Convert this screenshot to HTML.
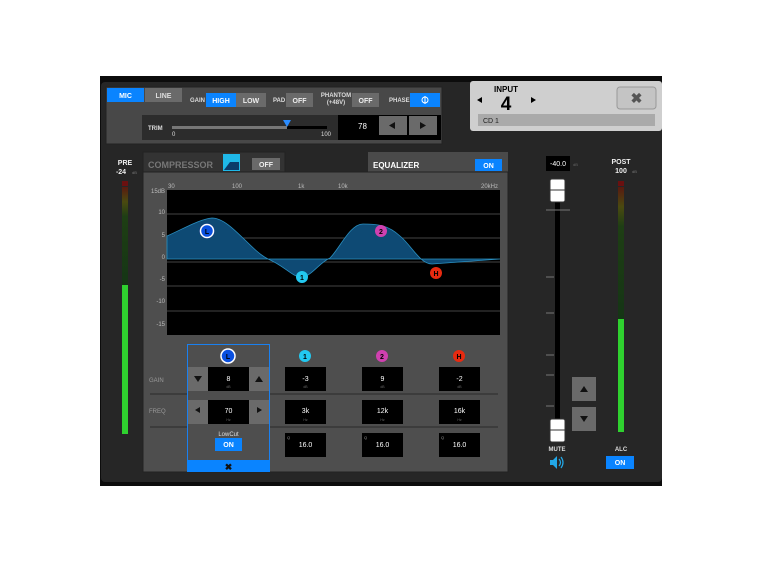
<!DOCTYPE html>
<html><head><style>
body{margin:0;background:#fff;width:762px;height:562px;overflow:hidden}
svg{display:block;font-family:"Liberation Sans",sans-serif}
</style></head><body>
<svg width="762" height="562" viewBox="0 0 762 562">
<rect x="0" y="0" width="762" height="562" fill="#fff"/>
<rect x="100" y="76" width="562" height="410" fill="#0c0c0c"/>
<rect x="101" y="82" width="561" height="400" rx="4" fill="#262626"/>
<!-- input box -->
<rect x="106" y="87" width="336" height="57" fill="#484848" stroke="#222"/>
<rect x="107" y="88" width="37" height="14" fill="#0a84ff"/>
<text x="125.5" y="98" font-size="7" fill="#fff" text-anchor="middle" font-weight="bold">MIC</text>
<rect x="145" y="88" width="37" height="14" fill="#6a6a6a"/>
<text x="163.5" y="98" font-size="7" fill="#ddd" text-anchor="middle" font-weight="bold">LINE</text>
<text x="190" y="102" font-size="6" fill="#ddd" font-weight="bold">GAIN</text>
<rect x="206" y="93" width="30" height="14" fill="#0a84ff"/>
<text x="221" y="103" font-size="7" fill="#fff" text-anchor="middle" font-weight="bold">HIGH</text>
<rect x="236" y="93" width="30" height="14" fill="#6a6a6a"/>
<text x="251" y="103" font-size="7" fill="#eee" text-anchor="middle" font-weight="bold">LOW</text>
<text x="273" y="102" font-size="6" fill="#ddd" font-weight="bold">PAD</text>
<rect x="286" y="93" width="27" height="14" fill="#6a6a6a"/>
<text x="299.5" y="103" font-size="7" fill="#eee" text-anchor="middle" font-weight="bold">OFF</text>
<text x="336" y="97" font-size="6" fill="#ddd" text-anchor="middle" font-weight="bold">PHANTOM</text>
<text x="336" y="104" font-size="6" fill="#ddd" text-anchor="middle" font-weight="bold">(+48V)</text>
<rect x="352" y="93" width="27" height="14" fill="#6a6a6a"/>
<text x="365.5" y="103" font-size="7" fill="#eee" text-anchor="middle" font-weight="bold">OFF</text>
<text x="389" y="102" font-size="6" fill="#ddd" font-weight="bold">PHASE</text>
<rect x="410" y="93" width="30" height="14" fill="#0a84ff"/>
<circle cx="425" cy="100" r="3" fill="none" stroke="#fff" stroke-width="1"/><line x1="425" y1="96" x2="425" y2="104" stroke="#fff"/>
<rect x="142" y="115" width="196" height="25" fill="#2c2c2c"/>
<rect x="338" y="115" width="103" height="25" fill="#000"/>
<text x="148" y="130" font-size="6" fill="#ddd" font-weight="bold">TRIM</text>
<rect x="172" y="126" width="115" height="3" fill="#777"/>
<rect x="287" y="126" width="40" height="3" fill="#000"/>
<polygon points="283,120 291,120 287,127" fill="#2a8cff"/>
<text x="172" y="136" font-size="6" fill="#ddd">0</text>
<text x="321" y="136" font-size="6" fill="#ddd">100</text>
<text x="358" y="129" font-size="8" fill="#fff">78</text>
<rect x="379" y="116" width="28" height="19" fill="#6a6a6a"/>
<polygon points="389,125.5 395,122 395,129" fill="#111"/>
<rect x="409" y="116" width="28" height="19" fill="#6a6a6a"/>
<polygon points="426,125.5 420,122 420,129" fill="#111"/>
<!-- input name -->
<rect x="470" y="81" width="192" height="50" rx="3" fill="#cfcfcf"/>
<text x="506" y="92" font-size="8" fill="#000" text-anchor="middle" font-weight="bold">INPUT</text>
<text x="506" y="110" font-size="19" fill="#000" text-anchor="middle" font-weight="bold">4</text>
<polygon points="477,100 482,97 482,103" fill="#000"/>
<polygon points="536,100 531,97 531,103" fill="#000"/>
<rect x="617" y="87" width="39" height="22" rx="3" fill="#c4c4c4" stroke="#999"/>
<text x="636.5" y="103" font-size="14" fill="#555" text-anchor="middle" font-weight="bold">✖</text>
<rect x="478" y="114" width="177" height="12" fill="#aaa"/>
<text x="483" y="123" font-size="7" fill="#222">CD 1</text>
<!-- PRE -->
<text x="125" y="165" font-size="7" fill="#eee" text-anchor="middle" font-weight="bold">PRE</text>
<text x="121" y="174" font-size="7" fill="#eee" text-anchor="middle" font-weight="bold">-24</text>
<text x="132" y="174" font-size="4" fill="#777">dB</text>
<rect x="122" y="181" width="6" height="5" fill="#6a1010"/>
<defs>
<linearGradient id="mg" x1="0" y1="0" x2="0" y2="1">
<stop offset="0" stop-color="#5a1a10"/><stop offset="0.15" stop-color="#4a4a10"/><stop offset="0.3" stop-color="#1e3e14"/><stop offset="1" stop-color="#153515"/></linearGradient>
</defs>
<rect x="122" y="187" width="6" height="98" fill="url(#mg)"/>
<rect x="122" y="285" width="6" height="149" fill="#2fd12f"/>
<!-- tabs -->
<rect x="143" y="152" width="142" height="22" fill="#333" stroke="#222"/>
<text x="148" y="168" font-size="9" fill="#777" font-weight="bold">COMPRESSOR</text>
<rect x="223" y="154" width="17" height="17" fill="#1fb8e8"/>
<polygon points="224,170 230,162 239,162 239,170" fill="#0b3b6a"/>
<rect x="252" y="158" width="28" height="12" fill="#6a6a6a"/>
<text x="266" y="167" font-size="7" fill="#eee" text-anchor="middle" font-weight="bold">OFF</text>
<rect x="368" y="152" width="140" height="22" fill="#4a4a4a"/>
<text x="373" y="168" font-size="8" fill="#fff" font-weight="bold">EQUALIZER</text>
<rect x="475" y="159" width="27" height="12" fill="#0a84ff"/>
<text x="488.5" y="168" font-size="7" fill="#fff" text-anchor="middle" font-weight="bold">ON</text>
<!-- eq panel -->
<rect x="143" y="172" width="365" height="300" fill="#4e4e4e" stroke="#222"/>
<rect x="167" y="190" width="333" height="145" fill="#000"/>
<g font-size="6" fill="#bbb">
<text x="168" y="188">30</text><text x="232" y="188">100</text><text x="298" y="188">1k</text><text x="338" y="188">10k</text><text x="481" y="188">20kHz</text>
<text x="165" y="193" text-anchor="end">15dB</text>
<text x="165" y="214" text-anchor="end">10</text>
<text x="165" y="237" text-anchor="end">5</text>
<text x="165" y="259" text-anchor="end">0</text>
<text x="165" y="281" text-anchor="end">-5</text>
<text x="165" y="303" text-anchor="end">-10</text>
<text x="165" y="326" text-anchor="end">-15</text>
</g>
<g stroke="#444" stroke-width="1">
<line x1="167" y1="214" x2="500" y2="214"/><line x1="167" y1="238" x2="500" y2="238"/>
<line x1="167" y1="262" x2="500" y2="262"/><line x1="167" y1="286" x2="500" y2="286"/>
<line x1="167" y1="311" x2="500" y2="311"/>
</g>
<path d="M167,236 C185,228 200,219 212,218 C230,218 250,250 268,259 C285,266 293,278 302,277 C312,276 320,262 330,258 C340,248 350,224 363,224 C378,224 388,225 400,236 C412,246 420,264 432,264 L500,259 L500,259 L167,259 Z" fill="#0e4a74" stroke="#2a8fc0" stroke-width="0.8"/>
<circle cx="207" cy="231" r="8" fill="#1a3a8a" opacity="0.5"/>
<circle cx="207" cy="231" r="6.5" fill="#0a50e0" stroke="#fff" stroke-width="1.5"/>
<text x="207" y="234" font-size="7" fill="#000" text-anchor="middle" font-weight="bold">L</text>
<circle cx="302" cy="277" r="6" fill="#22c8f0"/><text x="302" y="280" font-size="7" fill="#000" text-anchor="middle" font-weight="bold">1</text>
<circle cx="381" cy="231" r="6" fill="#d040b0"/><text x="381" y="234" font-size="7" fill="#000" text-anchor="middle" font-weight="bold">2</text>
<circle cx="436" cy="273" r="6" fill="#e82a10"/><text x="436" y="276" font-size="7" fill="#000" text-anchor="middle" font-weight="bold">H</text>
<!-- band controls -->
<line x1="150" y1="394" x2="498" y2="394" stroke="#2a2a2a"/>
<line x1="150" y1="427" x2="498" y2="427" stroke="#2a2a2a"/>
<text x="149" y="382" font-size="6" fill="#999">GAIN</text>
<text x="149" y="413" font-size="6" fill="#999">FREQ</text>
<rect x="187.5" y="344.5" width="82" height="127" fill="#4e4e4e" stroke="#1a80f0"/>
<rect x="187" y="460" width="83" height="12" fill="#0a84ff"/>
<text x="228.5" y="470" font-size="9" fill="#111" text-anchor="middle" font-weight="bold">✖</text>
<circle cx="228" cy="356" r="7" fill="#0a50e0" stroke="#fff" stroke-width="1.5"/><text x="228" y="359" font-size="7" fill="#000" text-anchor="middle" font-weight="bold">L</text>
<circle cx="305" cy="356" r="6" fill="#22c8f0"/><text x="305" y="359" font-size="7" fill="#000" text-anchor="middle" font-weight="bold">1</text>
<circle cx="382" cy="356" r="6" fill="#d040b0"/><text x="382" y="359" font-size="7" fill="#000" text-anchor="middle" font-weight="bold">2</text>
<circle cx="459" cy="356" r="6" fill="#e82a10"/><text x="459" y="359" font-size="7" fill="#000" text-anchor="middle" font-weight="bold">H</text>
<!-- L column -->
<rect x="188" y="367" width="20" height="24" fill="#6a6a6a"/><polygon points="194,376 202,376 198,382" fill="#111"/>
<rect x="208" y="367" width="41" height="24" fill="#000"/>
<rect x="249" y="367" width="20" height="24" fill="#6a6a6a"/><polygon points="255,382 263,382 259,376" fill="#111"/>
<rect x="188" y="400" width="20" height="24" fill="#6a6a6a"/><polygon points="195,410 200,407 200,413" fill="#111"/>
<rect x="208" y="400" width="41" height="24" fill="#000"/>
<rect x="249" y="400" width="20" height="24" fill="#6a6a6a"/><polygon points="262,410 257,407 257,413" fill="#111"/>
<text x="228.5" y="436" font-size="6" fill="#ddd" text-anchor="middle">LowCut</text>
<rect x="215" y="438" width="27" height="13" fill="#0a84ff"/>
<text x="228.5" y="447" font-size="7" fill="#fff" text-anchor="middle" font-weight="bold">ON</text>
<g fill="#000">
<rect x="285" y="367" width="41" height="24"/><rect x="362" y="367" width="41" height="24"/><rect x="439" y="367" width="41" height="24"/>
<rect x="285" y="400" width="41" height="24"/><rect x="362" y="400" width="41" height="24"/><rect x="439" y="400" width="41" height="24"/>
<rect x="285" y="433" width="41" height="24"/><rect x="362" y="433" width="41" height="24"/><rect x="439" y="433" width="41" height="24"/>
</g>
<g font-size="7" fill="#fff" text-anchor="middle">
<text x="228.5" y="381">8</text><text x="305.5" y="381">-3</text><text x="382.5" y="381">9</text><text x="459.5" y="381">-2</text>
<text x="228.5" y="413">70</text><text x="305.5" y="413">3k</text><text x="382.5" y="413">12k</text><text x="459.5" y="413">16k</text>
<text x="305.5" y="447">16.0</text><text x="382.5" y="447">16.0</text><text x="459.5" y="447">16.0</text>
</g>
<g font-size="3.5" fill="#666" text-anchor="middle">
<text x="228.5" y="388">dB</text><text x="305.5" y="388">dB</text><text x="382.5" y="388">dB</text><text x="459.5" y="388">dB</text>
<text x="228.5" y="421">Hz</text><text x="305.5" y="421">Hz</text><text x="382.5" y="421">Hz</text><text x="459.5" y="421">Hz</text>
</g>
<g font-size="4" fill="#999"><text x="287" y="439">Q</text><text x="364" y="439">Q</text><text x="441" y="439">Q</text></g>
<!-- fader -->
<rect x="546" y="156" width="24" height="15" fill="#000"/>
<text x="558" y="166" font-size="7" fill="#fff" text-anchor="middle">-40.0</text>
<text x="573" y="166" font-size="4" fill="#666">dB</text>
<rect x="555" y="185" width="5" height="256" fill="#000"/>
<g stroke="#777" stroke-width="1">
<line x1="546" y1="210" x2="570" y2="210"/><line x1="546" y1="277" x2="554" y2="277"/>
<line x1="546" y1="313" x2="554" y2="313"/><line x1="546" y1="355" x2="554" y2="355"/>
<line x1="546" y1="375" x2="554" y2="375"/><line x1="546" y1="406" x2="554" y2="406"/>
</g>
<rect x="550" y="179" width="15" height="23" rx="2" fill="#fff" stroke="#333"/><line x1="550" y1="190" x2="565" y2="190" stroke="#333"/>
<rect x="550" y="419" width="15" height="23" rx="2" fill="#fff" stroke="#333"/><line x1="550" y1="430" x2="565" y2="430" stroke="#333"/>
<rect x="572" y="377" width="24" height="24" fill="#6a6a6a"/><polygon points="580,392 588,392 584,386" fill="#111"/>
<rect x="572" y="407" width="24" height="24" fill="#6a6a6a"/><polygon points="580,416 588,416 584,422" fill="#111"/>
<text x="557" y="451" font-size="6" fill="#ddd" text-anchor="middle" font-weight="bold">MUTE</text>
<polygon points="550,460 553,460 557,456 557,469 553,465 550,465" fill="#22a8e8"/>
<path d="M559,459 Q562,462.5 559,466 M561,457 Q565,462.5 561,468" stroke="#22a8e8" fill="none" stroke-width="1.2"/>
<!-- POST -->
<text x="621" y="164" font-size="7" fill="#eee" text-anchor="middle" font-weight="bold">POST</text>
<text x="621" y="173" font-size="7" fill="#eee" text-anchor="middle" font-weight="bold">100</text>
<text x="632" y="173" font-size="4" fill="#777">dB</text>
<rect x="618" y="181" width="6" height="5" fill="#6a1010"/>
<rect x="618" y="187" width="6" height="132" fill="url(#mg)"/>
<rect x="618" y="319" width="6" height="113" fill="#2fd12f"/>
<text x="621" y="451" font-size="6" fill="#ddd" text-anchor="middle" font-weight="bold">ALC</text>
<rect x="606" y="456" width="28" height="13" fill="#0a84ff"/>
<text x="620" y="465" font-size="7" fill="#fff" text-anchor="middle" font-weight="bold">ON</text>
</svg>
</body></html>
